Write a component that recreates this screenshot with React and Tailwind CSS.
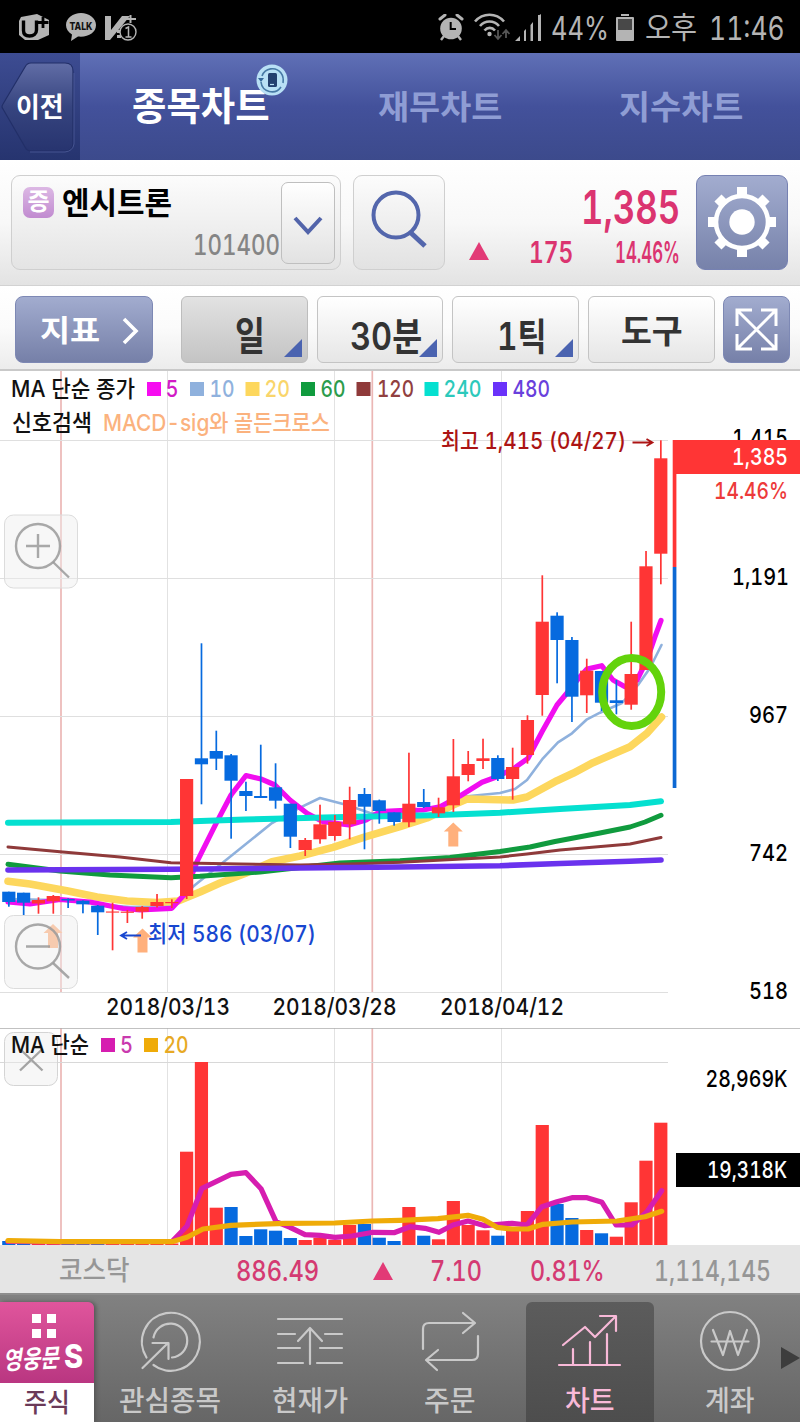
import { useLayoutEffect, useRef, useState } from "react";

// Text squeezed or stretched horizontally to a fixed width.
function Fit({ w, className = "", children }) {
  const ref = useRef(null);
  const [scale, setScale] = useState(1);
  useLayoutEffect(() => {
    setScale(w / ref.current.offsetWidth);
  }, [w, children]);
  return (
    <span className="inline-block shrink-0 text-left" style={{ width: w }}>
      <span
        ref={ref}
        className={"inline-block origin-left whitespace-nowrap align-top " + className}
        style={{ transform: `scaleX(${scale})` }}
      >
        {children}
      </span>
    </span>
  );
}

function StatusBar() {
  return (
    <div className="flex h-[53px] items-start bg-black text-[#b4b4b4]">
      <svg className="ml-[18px] mt-[13px] h-7 w-8" viewBox="0 0 32 28" fill="none">
        <path d="M3 4 19 1l12 6v15l-11 5H7l-6-5V8z" fill="#b4b4b4" />
        <path d="M5.500 7.500v10c0 4 2 5.500 6 5.500s7-2 7-6V7.500" stroke="#000" strokeWidth="3.400" />
        <path d="M25 4v11M19.500 9.500h11" stroke="#000" strokeWidth="2.800" />
      </svg>
      <svg className="ml-4 mt-[13px] h-7 w-[30px]" viewBox="0 0 30 28">
        <path d="M15 0C7 0 0 5 0 12c0 4 2 7 6 9.500L5 28l7-4.500C22 24.500 30 20 30 12 30 5 23 0 15 0z" fill="#b4b4b4" />
        <text x="3.500" y="16.500" fontSize="10.500" fontWeight="800" fill="#111" textLength="23" lengthAdjust="spacingAndGlyphs">TALK</text>
      </svg>
      <svg className="ml-[9px] mt-[14px] h-7 w-8" viewBox="0 0 32 28" fill="none">
        <path d="M0 2h6v14L17 2h8L5 26H0z" fill="#b4b4b4" />
        <path d="M25.500 1v8M20 5h11" stroke="#b4b4b4" strokeWidth="2" />
        <path d="M12 16h4v3h-4zM12 21h4v3h-4z" fill="#b4b4b4" />
        <circle cx="23" cy="18" r="8" fill="#000" stroke="#b4b4b4" strokeWidth="1.400" />
        <path d="M20.500 14.500 23.500 13v10M20.500 23h6" stroke="#b4b4b4" strokeWidth="1.500" />
      </svg>
      <svg className="ml-[301px] mt-[14px] h-[27px] w-[26px]" viewBox="0 0 26 27" fill="none">
        <circle cx="13" cy="14.500" r="10.800" fill="#b4b4b4" />
        <path d="M2 5 7 1M24 5l-5-4" stroke="#b4b4b4" strokeWidth="3" strokeLinecap="round" />
        <path d="m6 22-3 4M20 22l3 4" stroke="#b4b4b4" strokeWidth="2.400" />
        <path d="M12.700 8v7H18" stroke="#000" strokeWidth="2" />
      </svg>
      <svg className="ml-[10px] mt-[13px] h-7 w-9" viewBox="0 0 36 28" fill="none" stroke="#b4b4b4">
        <path d="M1 8.500C9-.5 22-.5 30 8.500" strokeWidth="2.600" />
        <path d="M6 13c5-6 14-6 19 0" strokeWidth="2.600" />
        <path d="M10.500 17.500c3-3.500 7.500-3.500 10.500 0" strokeWidth="2.600" />
        <circle cx="15.500" cy="21" r="2.200" fill="#b4b4b4" stroke="none" />
        <path d="M24 17v9m-3.500-4 3.500 4 3.500-4M32 25v-8m-3.500 4 3.500-4 3.500 4" stroke="#555" strokeWidth="1.800" />
      </svg>
      <svg className="ml-[4px] mt-[14px] h-[27px] w-7" viewBox="0 0 28 27" fill="#b4b4b4">
        <path d="M1 27 6 22v5zM10 17h2v10h-2zM16.500 11h2.500v16h-2.500zM24 1h3v26h-3z" />
        <path d="m10 17 2-2v2zM16.500 11 19 8v3zM24 2l3-2v4z" />
      </svg>
      <div className="ml-[9px] mt-[9px] text-[32px] leading-10"><Fit w={58}>44%</Fit></div>
      <svg className="ml-[7px] mt-[14px] h-[27px] w-[18px]" viewBox="0 0 18 27">
        <path d="M5 0h8v2H5zM0 4q0-1 1-1h16q1 0 1 1v22q0 1-1 1H1q-1 0-1-1z" fill="#b4b4b4" />
        <path d="M2 5h14v11H2z" fill="#484848" />
      </svg>
      <div className="ml-[11px] mt-[7px] text-[30px] leading-10"><Fit w={52}>오후</Fit></div>
      <div className="ml-[12px] mt-[9px] text-[32px] leading-10"><Fit w={76}>11:46</Fit></div>
    </div>
  );
}

function Header() {
  return (
    <div className="flex h-[107px] bg-linear-to-b from-[#6070b6] via-[#43519b] to-[#3c4a8c]">
      <div className="relative h-full w-20 bg-linear-to-b from-[#3d4c92] to-[#26346f]">
        <svg className="absolute inset-0 h-full w-full" viewBox="0 0 80 107">
          <defs>
            <linearGradient id="back" x1="0" y1="0" x2="0" y2="1">
              <stop offset="0" stopColor="#616da6" />
              <stop offset=".5" stopColor="#36447f" />
              <stop offset="1" stopColor="#27346f" />
            </linearGradient>
          </defs>
          <path d="M31 10h34q8 0 8 8v72q0 8-8 8H31q-4 0-6-4L3 56q-2-2 0-5l22-37q2-4 6-4z" fill="url(#back)" stroke="#222f68" strokeWidth="1.200" />
          <path d="M74 20v71q-1 7-9 8H30" fill="none" stroke="#5463a0" strokeWidth="1" opacity=".7" />
        </svg>
        <div className="relative pl-4 pt-[37px] text-[27px] font-bold leading-9 text-white"><Fit w={48}>이전</Fit></div>
      </div>
      <div className="relative w-60 pl-[52px] pt-[28px] text-[39px] font-bold leading-[50px] text-white">
        <Fit w={138}>종목차트</Fit>
        <svg className="absolute left-44 top-[11px] h-8 w-8" viewBox="0 0 32 32" fill="none">
          <circle cx="16" cy="16" r="15.500" fill="#b9e0f5" />
          <path d="M5 18a11 11 0 0 0 20 5M6 12a11 11 0 0 1 19-3q3 4 2 10" stroke="#4779a5" strokeWidth="1.600" />
          <path d="m2 14 6 0-3 4z" fill="#35689a" />
          <rect x="12" y="9" width="9" height="14" rx="1.500" fill="#24406f" />
          <path d="M14 20.500h4" stroke="#b9e0f5" strokeWidth="1.200" />
        </svg>
      </div>
      <div className="w-60 pl-[58px] pt-[31px] text-[33px] font-bold leading-[46px] text-[#8f9dd4]"><Fit w={124}>재무차트</Fit></div>
      <div className="w-60 pl-[59px] pt-[31px] text-[33px] font-bold leading-[46px] text-[#8f9dd4]"><Fit w={124}>지수차트</Fit></div>
    </div>
  );
}

function QuotePanel() {
  return (
    <div className="flex h-[126px] border-b border-[#d2d2d2] bg-linear-to-b from-white via-[#f8f8f8] to-[#e3e3e3] pl-[11px] pr-3 pt-[15px]">
      <div className="flex h-[95px] w-[330px] rounded-[9px] border-[1.5px] border-[#cfcfcf] bg-linear-to-b from-[#fcfcfc] to-[#e4e4e4]">
        <div className="flex w-[269px] flex-col">
          <div className="flex h-[46px] pl-[11px] pt-[11px]">
            <div className="flex size-[31px] justify-center rounded-[7px] bg-linear-to-b from-[#dcb8e4] to-[#c18bd0] text-[24px] font-semibold leading-[30px] text-white">증</div>
            <div className="-mt-[2px] ml-2 text-[31px] font-bold leading-9 text-black"><Fit w={110}>엔시트론</Fit></div>
          </div>
          <div className="flex justify-end pr-px text-[28px] leading-[46px] text-[#858585]"><Fit w={87} className="font-medium">101400</Fit></div>
        </div>
        <div className="mt-[6px] flex h-[82px] w-[54px] justify-center rounded-[7px] border border-[#bfbfbf] bg-linear-to-b from-white to-[#e2e2e2]">
          <svg className="mt-[33px] h-[20px] w-[30px]" viewBox="0 0 30 20" fill="none"><path d="m2 2 13 14L28 2" stroke="#5264aa" strokeWidth="4" /></svg>
        </div>
      </div>
      <div className="ml-3 h-[95px] w-[92px] rounded-[9px] border border-[#cfcfcf] bg-linear-to-b from-[#fcfcfc] to-[#e2e2e2]">
        <svg className="ml-[16px] mt-[14px] h-[60px] w-[60px]" viewBox="0 0 60 60" fill="none" stroke="#5366ac">
          <circle cx="26" cy="25" r="22.500" strokeWidth="4" />
          <path d="m40 42 15 14" strokeWidth="5" />
        </svg>
      </div>
      <div className="flex-1 pr-4 text-[#db3470]">
        <div className="flex justify-end pt-[9px] text-[47px] font-semibold leading-[46px]"><Fit w={99}>1,385</Fit></div>
        <div className="mt-[7px] flex justify-end text-[30px] font-semibold leading-[30px]">
          <svg className="mr-[40px] mt-[5px] h-[18px] w-5" viewBox="0 0 20 18"><path d="M10 0 20 18H0z" fill="#e23a76" /></svg>
          <Fit w={44}>175</Fit>
          <span className="w-[42px]" />
          <Fit w={65}>14.46%</Fit>
        </div>
      </div>
      <div className="h-[95px] w-[92px] rounded-[9px] border border-[#7681b2] bg-linear-to-b from-[#a2accf] to-[#7782aa]">
        <svg className="ml-[10px] mt-[10px] h-[72px] w-[70px]" viewBox="-35 -36 70 72" fill="none">
          <g fill="#fff">
            <path d="M-5-35H5v10H-5zM-5 25H5v10H-5zM-34-5h10V5h-10zM24-5h10V5H24z" />
            <g transform="rotate(45)"><path d="M-5-34H5v10H-5zM-5 24H5v10H-5zM-34-5h10V5h-10zM24-5h10V5H24z" /></g>
          </g>
          <circle r="26" stroke="#fff" strokeWidth="4.600" />
          <circle r="12.700" fill="#fff" />
        </svg>
      </div>
    </div>
  );
}

function Corner() {
  return (
    <svg className="absolute bottom-[5px] right-[5px] size-[18px]" viewBox="0 0 18 18"><path d="M18 0v18H0z" fill="#4a63b0" /></svg>
  );
}

function Toolbar() {
  return (
    <div className="flex h-[85px] border-b-2 border-[#c9c9c9] bg-linear-to-b from-white via-[#fbfbfb] to-[#ececec] pl-[15px] pr-[10px] pt-[10px] font-semibold text-[#333]">
      <div className="flex h-[67px] w-[138px] rounded-lg border border-[#7d88b4] bg-linear-to-b from-[#a2accf] to-[#7680a8] pl-6 text-white">
        <div className="pt-[15px] text-[30px] font-bold leading-9"><Fit w={60}>지표</Fit></div>
        <svg className="ml-[21px] mt-5 h-7 w-[18px]" viewBox="0 0 18 28" fill="none"><path d="m3 2 12 12L3 26" stroke="#fff" strokeWidth="3.600" /></svg>
      </div>
      <div className="relative ml-7 h-[67px] w-[127px] rounded-md border border-[#bdbdbd] bg-linear-to-b from-[#e2e2e2] to-[#c4c4c4] pl-[53px] pt-[14px] text-[39px] leading-[50px]">
        <Fit w={30}>일</Fit><Corner />
      </div>
      <div className="relative ml-[9px] h-[67px] w-[126px] rounded-md border border-[#c4c4c4] bg-linear-to-b from-white to-[#e6e6e6] pl-[32px] pt-[14px] text-[38px] leading-[50px]">
        <Fit w={72}>30분</Fit><Corner />
      </div>
      <div className="relative ml-[9px] h-[67px] w-[127px] rounded-md border border-[#c4c4c4] bg-linear-to-b from-white to-[#e6e6e6] pl-[44px] pt-[14px] text-[38px] leading-[50px]">
        <Fit w={50}>1틱</Fit><Corner />
      </div>
      <div className="ml-[9px] h-[67px] w-[127px] rounded-md border border-[#c4c4c4] bg-linear-to-b from-white to-[#e6e6e6] pl-8 pt-[13px] text-[33px] leading-[42px]">
        <Fit w={62}>도구</Fit>
      </div>
      <div className="ml-2 h-[67px] w-[67px] rounded-lg border border-[#7d88b4] bg-linear-to-b from-[#a2accf] to-[#7680a8]">
        <svg className="ml-[11px] mt-[11px] size-[43px]" viewBox="0 0 43 43" fill="none" stroke="#fff" strokeWidth="3">
          <path d="M2 18V2h15M26 2h15v16M41 26v15H26M17 41H2V26M2 2l39 39M41 2 2 41" />
        </svg>
      </div>
    </div>
  );
}

// [rising, high, top, bottom, low, volumeTop]
const days = [
  [0, 891.7, 891.7, 902, 906.7, 1241], [0, 892.7, 892.7, 902.7, 916, 1242.5], [1, 897.3, 900, 903.5, 913.7, 1243],
  [1, 895, 896, 901.3, 913.7, 1243], [0, 898.3, 899, 900.5, 908, 1243.5], [0, 900.4, 900.7, 904.3, 913.3, 1243.5],
  [0, 905, 905.7, 912.3, 935, 1243], [1, 902.7, 911.5, 912.6, 950.3, 1243], [1, 910, 911.6, 912.8, 923, 1243.5],
  [1, 906, 907, 911.7, 918.7, 1243.5], [1, 894, 902, 906, 907.5, 1243], [1, 899.3, 902, 903.2, 908, 1243.5],
  [1, 779, 779, 896, 899, 1151.7], [0, 643.3, 758.3, 764.3, 804.3, 1062], [0, 730.7, 751, 758.7, 770, 1207.7],
  [0, 754, 755.3, 780.7, 838.7, 1207], [0, 781.7, 791, 796, 811, 1236], [0, 744.7, 796, 798, 798, 1229.3],
  [0, 763.3, 787.3, 800.7, 808.7, 1230.7], [0, 803.7, 803.7, 836.7, 848, 1238], [1, 838, 840, 850, 856, 1240],
  [1, 804.7, 824.3, 839.3, 843.7, 1237.7], [1, 815, 822, 836, 840.7, 1239.7], [1, 786.7, 800, 824.3, 839.3, 1225],
  [0, 788, 794, 806.7, 849.3, 1224], [0, 799.6, 800.3, 811, 823.7, 1237.7], [0, 812.3, 812.3, 822, 825.7, 1241],
  [1, 752.7, 803.7, 822.3, 827, 1207], [0, 789, 802, 807, 808, 1235.7], [1, 797.7, 807.3, 813.3, 817, 1239.3],
  [1, 739, 776.3, 805.3, 812, 1201], [1, 751, 764, 775, 781.3, 1225], [1, 738.7, 758.3, 761, 769, 1230.3],
  [0, 755.3, 758, 779, 781, 1235.7], [1, 747.7, 767, 779, 799.7, 1230], [1, 715.3, 720, 755, 763.7, 1211],
  [1, 575.3, 621.7, 695, 715.7, 1125], [0, 612.3, 615.7, 640, 683.3, 1204], [0, 637, 640, 696.7, 722, 1218],
  [1, 658.7, 670.7, 695.3, 713, 1230], [0, 671, 671, 702.7, 711, 1233.3], [0, 680, 700.3, 703, 714.3, 1236.7],
  [1, 621.7, 674, 704.7, 709.7, 1202.3], [1, 551, 566.3, 670, 670, 1160.7], [1, 440.3, 458.3, 553.7, 584.3, 1122.7],
];
// Days whose volume bar is red although the candle body is falling.
const volumeRising = { 13: 1, 14: 1, 41: 1 };
const cx = (i) => 8.8 + i * 14.818;

const priceLines = [
  ["#8fb1dd", 2.6, "8,899 53,900 82,902 105,905 130,907 171,906 195,885 272,823 300,807.7 320,798 347,805 370,813 400,815 440,806 460,797 480,795 500,793 515,789 527,780 543,758.3 558,742.3 572,733.3 587,719.3 600,712.7 622,703 638,685 650,668 661.5,645"],
  ["#fdd75d", 7.6, "8,881.3 30,884 68,891 97,897 127,901 157,902.5 178,901 200,892 220,883 245,873.5 272,861.7 300,856 333,847.3 366,836.7 400,826.7 427,818 453,805 467,799 513,800 527,797 557,780.7 573,773.3 593,762.7 630,746.7 647,733.3 661.5,717"],
  ["#f10df0", 5.2, "8,902 30,904 60,899.5 90,902 123,908.5 140,910 171.8,908.3 184,895 197,861.7 217,821.7 231,795 246,775.5 262,779.3 275,785 290,800 307,813.3 323,821.7 349,825 366,820 380,811.7 400,810.7 423,810 440,806.7 460,796 482,782.3 497,776.7 513,769 528,758.3 542,731.7 557,705 567,693 580,676.7 587,669 601.7,665.7 613,680 625,686.7 637,680 647,660 655,636.7 661,620.5"],
  ["#05e0d0", 6, "8,822.7 171,822 245,819.5 334,817.3 433,815.3 500,812.7 560,809 630,805 661,801.3"],
  ["#109b3e", 5, "8,864.3 60,871 110,875 171,877.7 200,876.3 260,872 340,863 400,860.7 450,857.5 500,851.5 530,847 555,841.5 600,833 630,827 645,822 661,815.3"],
  ["#8f3a3a", 3, "8,847 60,851.7 120,857 171,862.7 240,864 300,865 350,864 400,862.3 500,857 527,854 560,850 630,844 661,837.5"],
  ["#6a32ee", 5.6, "8,870 171,869.3 300,868 400,867 500,865.7 560,863.5 630,861.3 661,860"],
];
const volumeLines = [
  ["#d61db0", "8,1241.5 60,1242 172,1241.5 187,1226 202,1188.3 231,1174.3 246,1172.7 261,1188.7 276,1221.7 290,1227.3 305,1234.7 320,1235.3 335,1237.3 352,1236 373,1232.3 394,1232.7 410,1226.7 425,1228.3 439,1232.3 453,1225 468,1221 485,1225.7 512,1223.3 527,1225 542,1206.7 557,1201.7 572,1197.7 587,1197.7 602,1202.3 616,1225 632,1225 647,1211.7 661.7,1190.7"],
  ["#efab08", "8,1240.7 60,1241.7 172,1241.7 187,1237.3 203,1229 231,1225.3 285,1223.3 335,1223 372,1221 400,1220.3 438,1218.7 468,1215.3 483,1219.3 497,1227.3 512,1229 528,1229 543,1224.3 572,1222 617,1221 645,1216.7 661.7,1211.3"],
];
const legend = [
  [147, "5", 165.5, 13, "#f60cf0", "#d21ac6"], [190, "10", 209.5, 25, "#8fb1dd", "#8fb1dd"], [245.5, "20", 264.5, 25.5, "#fdd75d", "#f9d56b"],
  [301, "60", 320.5, 25, "#109b3e", "#2b9c4c"], [356.500, "120", 377, 37, "#8f3a3a", "#914040"], [424.500, "240", 443.5, 38, "#05e0d0", "#2cc9bb"],
  [493, "480", 512.5, 37.5, "#6a32fa", "#6940dc"],
];

function Label({ x, y, w, size = 23.5, fill = "#111", weight = 500, children }) {
  return (
    <text x={x} y={y} fontSize={size} fontWeight={weight} fill={fill} textLength={w} lengthAdjust="spacingAndGlyphs">{children}</text>
  );
}

function GridLines({ top, bottom }) {
  return (
    <g>
      {[167.5, 334.5, 501.5].map((x) => <path key={x} d={`M${x} ${top}V${bottom}`} stroke="#e2e2e2" />)}
      {[61, 372.3].map((x) => <path key={x} d={`M${x} ${top}V${bottom}`} stroke="#ebb7b5" strokeWidth="1.700" />)}
    </g>
  );
}

function Arrow({ x, y }) {
  return <path transform={`translate(${x} ${y})`} d="M0 0 9.500 9H5v15h-10V9h-4.500z" fill="#ffb07c" />;
}

function PriceChart() {
  return (
    <svg className="block h-[657px] w-full bg-white" viewBox="0 371 800 657">
      <GridLines top={371} bottom={993} />
      {[440.5, 578.5, 716.5, 854.5, 992.5].map((y) => <path key={y} d={`M0 ${y}H668`} stroke="#dfdfdf" />)}
      <Arrow x={53} y={924} /><Arrow x={142.5} y={928.5} /><Arrow x={453.3} y={822.5} />
      {priceLines.map(([c, w, p]) => <polyline key={c} points={p} fill="none" stroke={c} strokeWidth={w} strokeLinecap="round" strokeLinejoin="round" />)}
      {days.map(([up, hi, top, bottom, low], i) => (
        <g key={i} fill={up ? "#ff3535" : "#066adf"}>
          <rect x={cx(i) - 0.8} y={hi} width="1.700" height={low - hi} />
          <rect x={cx(i) - 6.6} y={top} width="13.200" height={bottom - top} />
        </g>
      ))}
      <ellipse cx="631.700" cy="692" rx="29.500" ry="34" fill="none" stroke="#63d30c" strokeWidth="8" />

      <g fill="#ededed" fillOpacity=".45" stroke="#dcdcdc">
        <rect x="4.500" y="515" width="73" height="73" rx="9" />
        <rect x="4.500" y="915.500" width="73" height="73" rx="9" />
      </g>
      <g fill="none" stroke="#9a9a9a" strokeOpacity=".85" strokeWidth="2.400">
        <circle cx="38" cy="546" r="22" /><path d="M26 546h24M38 534v24M53 562l16 15.500" />
        <circle cx="38" cy="946.500" r="22" /><path d="M26 946.500h24M53 963l16 15" />
      </g>

      <Label x={11} y={397} w={124} size={23}>MA 단순 종가</Label>
      {legend.map(([x, name, tx, w, box, ink]) => (
        <g key={name}>
          <rect x={x} y="382" width="14" height="14" fill={box} />
          <Label x={tx} y={397} w={w} fill={ink}>{name}</Label>
        </g>
      ))}
      <Label x={12} y={431} w={80} size={23}>신호검색</Label>
      <Label x={103} y={431} w={227} size={23} fill="#fbb27e">MACD-sig와 골든크로스</Label>
      <Label x={441} y={449} w={185} size={23} fill="#ac1414">최고 1,415 (04/27)</Label>
      <path d="M632.500 442.500h19m-5-3.500 6 3.500-6 3.500" fill="none" stroke="#ac1414" strokeWidth="1.800" />
      <path d="M141 935.500h-19m5-3.500-6 3.500 6 3.500" fill="none" stroke="#1747d0" strokeWidth="1.800" />
      <Label x={148} y={942} w={168} size={23} fill="#1747d0">최저 586 (03/07)</Label>

      <Label x={732} y={446} w={56} fill="#000">1,415</Label>
      <rect x="672.700" y="440" width="127.300" height="34" fill="#ff3535" />
      <rect x="672.700" y="474" width="3.700" height="93" fill="#ff3535" />
      <rect x="672.700" y="567" width="3.700" height="221" fill="#0d68d3" />
      <Label x={732} y={465} w={56} fill="#fff">1,385</Label>
      <Label x={714} y={499} w={74} fill="#ed3a3a">14.46%</Label>
      <Label x={732} y={585} w={57} fill="#000">1,191</Label>
      <Label x={749} y={723} w={39} fill="#000">967</Label>
      <Label x={749} y={861} w={39} fill="#000">742</Label>
      <Label x={749} y={999} w={39} fill="#000">518</Label>
      <Label x={106} y={1015} w={124}>2018/03/13</Label>
      <Label x={272.5} y={1015} w={124}>2018/03/28</Label>
      <Label x={440} y={1015} w={124}>2018/04/12</Label>
    </svg>
  );
}

function VolumeChart() {
  return (
    <svg className="block h-[217px] w-full bg-white" viewBox="0 1028 800 217">
      <GridLines top={1028} bottom={1245} />
      <path d="M0 1062.500H668" stroke="#d8d8d8" />
      <path d="M0 1027.500H800" stroke="#adadad" strokeWidth="2.500" />
      {days.map(([up, , , , , top], i) => (
        <rect key={i} x={cx(i) - 6.6} y={top} width="13.200" height={1245 - top} fill={up || volumeRising[i] ? "#ff3535" : "#066adf"} />
      ))}
      {volumeLines.map(([c, p]) => <polyline key={c} points={p} fill="none" stroke={c} strokeWidth="5.200" strokeLinecap="round" strokeLinejoin="round" />)}
      <rect x="4.500" y="1032.500" width="53" height="53" rx="9" fill="#ededed" fillOpacity=".45" stroke="#d4d4d4" />
      <path d="m20 1049 22.500 21.500m0-21.500L20 1070.500" stroke="#a4a4a4" strokeWidth="2.400" />
      <Label x={11} y={1053} w={78} size={23}>MA 단순</Label>
      <rect x="101" y="1038" width="14" height="14" fill="#d61db0" />
      <Label x={120} y={1053} w={13} fill="#c93aae">5</Label>
      <rect x="144" y="1038" width="14" height="14" fill="#efab08" />
      <Label x={163.5} y={1053} w={25} fill="#e7a924">20</Label>
      <Label x={705.5} y={1087} w={82} fill="#000">28,969K</Label>
      <rect x="676" y="1153" width="124" height="34" fill="#000" />
      <Label x={707} y={1178} w={80} fill="#fff">19,318K</Label>
    </svg>
  );
}

function IndexBar() {
  return (
    <div className="flex h-12 bg-[#e5e5e5] pl-[59px] text-[28px] font-medium leading-[52px] text-[#d43a72]">
      <Fit w={71} className="text-[27px] text-[#969696]">코스닥</Fit>
      <span className="w-[106px]" />
      <Fit w={83}>886.49</Fit>
      <svg className="ml-[54px] mt-[17px] h-[18px] w-5" viewBox="0 0 20 18"><path d="M10 0 20 18H0z" fill="#e23a76" /></svg>
      <span className="w-[37px]" />
      <Fit w={52}>7.10</Fit>
      <span className="w-[48px]" />
      <Fit w={75}>0.81%</Fit>
      <span className="w-[49px]" />
      <Fit w={117} className="text-[#969696]">1,114,145</Fit>
    </div>
  );
}

const navItems = [
  {
    name: "관심종목", width: 102, icon: (
      <g>
        <path d="M7.500 47.500A29 29 0 1 1 14.500 55" />
        <path d="M14.500 27.500A17 17 0 1 1 33 47.500" />
        <path d="M3.500 58 29 33M13.500 33h16v16" />
      </g>
    ),
  },
  {
    name: "현재가", width: 76, icon: (
      <path d="M-1 9h64M-1 24h17M46 24h17M-1 38h22M41 38h22M-1 53h25M38 53h25M31 54V19M19 31l12-13 12 13" />
    ),
  },
  {
    name: "주문", width: 52, icon: (
      <path d="M4 39V19q0-6 6-6h45M44 3l12 10-12 10M59 26v18q0 6-6 6H8M19 40 7 50l11 10" />
    ),
  },
  {
    name: "차트", width: 50, active: true, icon: (
      <path d="M0 55h61M14 54V39M31 54V32M48 54V24M4 35 26 17l10 10L56 7M41 6h16v15" />
    ),
  },
  {
    name: "계좌", width: 50, icon: (
      <g>
        <circle cx="31" cy="31" r="29" />
        <path d="M14 20l10 25 7-24 8 24 9-25M12.500 31.500h37" />
      </g>
    ),
  },
];

function BottomNav() {
  return (
    <div className="relative flex h-[129px] border-t-2 border-[#8e8e8e] bg-linear-to-b from-[#818181] to-[#666]">
      <div className="mr-[6px] mt-[7px] flex w-[94px] flex-col overflow-hidden rounded-tr-md shadow-[2px_0_4px_#555]">
        <div className="h-[81px] bg-linear-to-b from-[#e0559c] to-[#b93681] pt-3">
          <div className="ml-8 grid w-6 grid-cols-2 gap-[6px]">
            <span className="size-[9px] bg-white" /><span className="size-[9px] bg-white" />
            <span className="size-[9px] bg-white" /><span className="size-[9px] bg-white" />
          </div>
          <div className="mt-px flex items-center pl-[5px] leading-9 text-white">
            <div className="-skew-x-12 -rotate-3 font-['Noto_Sans_CJK_KR',sans-serif] text-[25px] font-bold"><Fit w={56}>영웅문</Fit></div>
            <div className="ml-[3px] text-[32px] font-extrabold"><Fit w={19}>S</Fit></div>
          </div>
        </div>
        <div className="flex-1 bg-white pl-6 pt-0.5 text-[26px] font-medium leading-9 text-[#6b3a58]"><Fit w={46}>주식</Fit></div>
      </div>
      {navItems.map(({ name, width, icon, active }) => (
        <div key={name} className={active ? "flex w-[140px] flex-col text-[#f8b9d8]" : "flex w-[140px] flex-col text-[#c9c9c9]"}>
          <div className={active ? "mx-[6px] mt-[7px] flex flex-1 flex-col items-center rounded-t-md bg-linear-to-b from-[#5c5c5c] to-[#4d4d4d]" : "mt-[7px] flex flex-1 flex-col items-center"}>
            <svg className="mt-[8px] h-[62px] w-[62px] overflow-visible" viewBox="0 0 62 62" fill="none" stroke="currentColor" strokeWidth="2.200" strokeLinecap="round" strokeLinejoin="round">{icon}</svg>
            <div className="mt-[7px] text-[28px] font-medium leading-[44px]"><Fit w={width}>{name}</Fit></div>
          </div>
        </div>
      ))}
      <svg className="absolute right-0 top-[52px] h-[22px] w-[19px]" viewBox="0 0 19 22"><path d="M0 0 19 11 0 22z" fill="#3d3d3d" /></svg>
    </div>
  );
}

export default function App() {
  return (
    <div className="flex h-[1422px] w-[800px] flex-col overflow-hidden bg-white font-['Inter','Noto_Sans_CJK_KR',sans-serif] tabular-nums">
      <StatusBar />
      <Header />
      <QuotePanel />
      <Toolbar />
      <PriceChart />
      <VolumeChart />
      <IndexBar />
      <BottomNav />
    </div>
  );
}
